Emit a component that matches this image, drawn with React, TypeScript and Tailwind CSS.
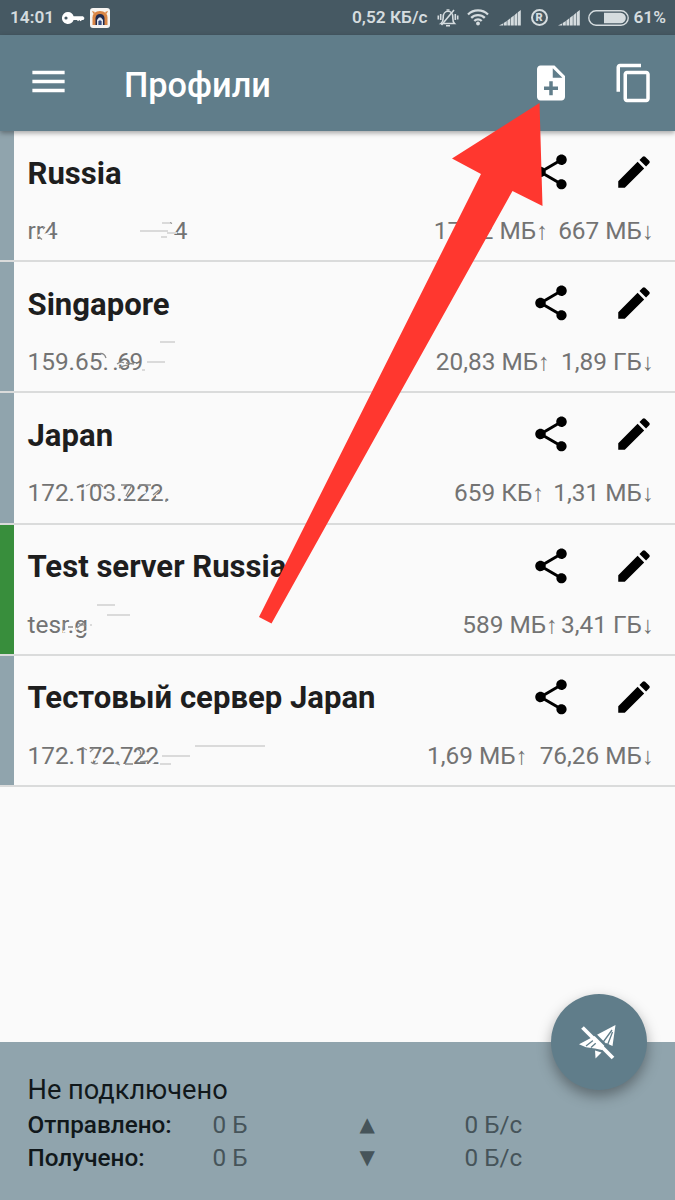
import { MdContentCopy, MdEdit, MdMenu, MdNoteAdd, MdShare } from 'react-icons/md'

type Line = [x: number, y: number, width: number]

type Profile = {
  name: string
  host: string
  hostEnd?: string
  hostEndClass?: string
  sent: string
  received: string
  gap: string
  active?: boolean
  marks: Line[]
  cuts: Line[]
  scraps: string
}

// Smudged address, all relative to the address line:
// marks are leftover light strokes, cuts are erased pieces, scraps are stray bits of digits
const profiles: Profile[] = [
  {
    name: 'Russia',
    host: 'rr4',
    hostEnd: '4',
    hostEndClass: 'ml-[116px]',
    sent: '17,62 МБ',
    received: '667 МБ',
    gap: 'gap-[10px]',
    marks: [[112, 16, 28], [134, 8, 8], [139, 18, 10], [133, 22, 6]],
    cuts: [[10, 21, 4], [16, 20, 6], [18, 11, 5]],
    scraps: 'M11 22l3 2.500M15 14l2-2M142 7.500l2 1',
  },
  {
    name: 'Singapore',
    host: '159.65',
    hostEnd: '. .69',
    hostEndClass: 'tracking-[-1.4px]',
    sent: '20,83 МБ',
    received: '1,89 ГБ',
    gap: 'gap-[11px]',
    marks: [[132, -4, 15], [119, 16, 18], [114, 24, 3]],
    cuts: [[90, 18, 9], [101, 20, 7]],
    scraps: 'M70 8q6-2 8 4M89 18q4-3 7-1M91 22q7-4 9-2M98 17l8 1',
  },
  {
    name: 'Japan',
    host: '172.103.222.',
    sent: '659 КБ',
    received: '1,31 МБ',
    gap: 'gap-[9px]',
    marks: [],
    cuts: [[50, 13, 7], [80, 16, 7], [94, 22, 5], [113, 17, 5], [128, 19, 8]],
    scraps: 'M58 9l4-2M66 10q6-5 9 0M79 15l6 2M93 8h10M104 8l-6 11M111 8h12M125 18l6-5M137 24h2',
  },
  {
    name: 'Test server Russia',
    host: 'tesr.g',
    sent: '589 МБ',
    received: '3,41 ГБ',
    gap: 'gap-[3px]',
    active: true,
    marks: [[69, -4, 18], [79, 6, 23], [62, 16, 2]],
    cuts: [[35, 23, 5], [48, 20, 5], [54, 24, 6]],
    scraps: 'M36 13l-1 8M40 18h5M49 19q5-5 9-2M50 14q3 3 6-1',
  },
  {
    name: 'Тестовый сервер Japan',
    host: '172.1',
    hostEnd: '72.722',
    hostEndClass: 'tracking-[-0.9px]',
    sent: '1,69 МБ',
    received: '76,26 МБ',
    gap: 'gap-[12px]',
    marks: [[134, 16, 28], [167, 6, 70], [132, 24, 11]],
    cuts: [[60, 14, 6], [66, 20, 6], [77, 13, 5], [100, 23, 5], [115, 16, 6], [121, 24, 5]],
    scraps: 'M55 8l4 2M62 12l4-4M63 22q3 3 7 1M87 23l5 2M97 24h8M109 9q5 1 3 6M112 22l8-1',
  },
]

const statusInk = '#d5dcdf'

function Signal() {
  return (
    <svg width="22" height="16" viewBox="0 0 22 16" fill={statusInk}>
      <path d="M0 15.500 4 13.400V15.500ZM4.700 12.900 7.800 11V15.500H4.700ZM8.400 10.400 11.300 8.300V15.500H8.400ZM11.900 7.700 14.800 5.600V15.500H11.900ZM15.400 5.200 18.200 2.800V15.500H15.400ZM18.800 2.200 21.800 0V15.500H18.800Z" />
    </svg>
  )
}

function StatusBar() {
  return (
    <div className="flex h-[35px] items-center bg-[#465963] pl-[10px] pr-[9px] text-[17.3px] font-semibold text-[#d5dcdf]">
      <span className="w-[52px]">14:01</span>
      <svg width="23" height="14" viewBox="0 0 23 14" fill="#fff">
        <path
          fillRule="evenodd"
          d="M6 1a6 6 0 1 0 5.600 8H15l1 1.200 1.300-1.200 1.200 1.200L20 9h1.500L22.500 7 21 5.300h-9.400A6 6 0 0 0 6 1ZM4 5.400a1.600 1.600 0 1 1 0 3.200 1.600 1.600 0 0 1 0-3.200Z"
        />
      </svg>
      <svg className="ml-[5px]" width="20" height="20" viewBox="0 0 20 20">
        <rect width="20" height="20" rx="3" fill="#f6f4f1" />
        <path d="M2.500 17V9.500Q3 3 10 3t7.500 6.500V17Z" fill="#d98545" />
        <path d="M2 3 5 4 3.500 6ZM18 3 15 4 16.500 6Z" fill="#d98545" />
        <path d="M5.500 17v-7Q6 6 10 6t4.500 4v7Z" fill="#202b4f" />
        <path d="M7 17v-5l2-2.500h2l2 2.500v5h-1.500v-4h-3v4Z" fill="#dfe5ee" />
        <path d="M9 17v-4.500h2V17Z" fill="#35508a" />
      </svg>
      <span className="ml-auto">0,52 КБ/с</span>
      <svg className="ml-[9px]" width="22" height="20" viewBox="0 0 22 20" fill="none" stroke={statusInk} strokeWidth="1.600">
        <path d="M4 15.500h13.500c-2-2-1.700-3.500-1.700-6.500 0-3.300-2-5.700-4.800-5.700S6.200 5.700 6.200 9c0 3 .3 4.500-2.200 6.500Z" />
        <path d="M9.500 2h3M9 17.800h4M4.500 17 17 2" />
        <path d="M3.700 6v6M1.300 7.500v4M18.300 6v6M20.700 7.500v4" />
      </svg>
      <svg className="ml-[8px]" width="22" height="17" viewBox="0 0 22 17" fill="none" stroke={statusInk} strokeWidth="2.300">
        <path d="M1 5.500a14.300 14.300 0 0 1 20 0M4.200 8.900a9.700 9.700 0 0 1 13.600 0M7.300 12a5.300 5.300 0 0 1 7.400 0" />
        <circle cx="11" cy="14.500" r="1.900" fill={statusInk} stroke="none" />
      </svg>
      <div className="ml-[10px] flex items-center gap-[10px]">
        <Signal />
        <span className="flex size-[17px] items-center justify-center rounded-full border-2 border-[#d5dcdf] text-[11px] font-black leading-none">
          R
        </span>
        <Signal />
      </div>
      <svg className="ml-[8px]" width="41" height="16" viewBox="0 0 41 16">
        <rect x=".8" y=".8" width="39.400" height="14.400" rx="7.200" fill="none" stroke={statusInk} strokeWidth="1.400" />
        <path d="M16 2.700h16.500a5.300 5.300 0 0 1 0 10.600H16Z" fill={statusInk} />
      </svg>
      <span className="ml-[5px]">61%</span>
    </div>
  )
}

function Toolbar() {
  return (
    <header className="relative z-10 flex h-[96px] items-center bg-[#607d8a] pl-[26.5px] pr-[20px] text-white shadow-[0_2px_5px_rgba(0,0,0,0.35)]">
      <MdMenu size={43} className="-mt-[3px]" />
      <h1 className="ml-[54.5px] mt-[3px] text-[34.3px] font-medium leading-[40px]">Профили</h1>
      <div className="-mt-px ml-auto flex gap-[41px]">
        <MdNoteAdd size={42} />
        <MdContentCopy size={42} />
      </div>
    </header>
  )
}

function Traffic({ value, arrow }: { value: string; arrow: string }) {
  return (
    <span className="whitespace-nowrap">
      {value}
      <span className="font-['Liberation_Sans',sans-serif] text-[24px] leading-none">{arrow}</span>
    </span>
  )
}

function ProfileRow({ profile }: { profile: Profile }) {
  return (
    <li className="flex h-[131.2px] border-b-2 border-[#dadbdb]">
      <div className={`w-[14px] shrink-0 ${profile.active ? 'bg-[#388e3c]' : 'bg-[#90a4ad]'}`} />
      <div className="flex grow flex-col pl-[13.5px] pr-[20px] pt-[20px]">
        <div className="flex h-[42px] items-center">
          <h2 className="mt-[3px] text-[31.1px] font-bold leading-[36px] text-[#1e1e1e]">{profile.name}</h2>
          <div className="ml-auto flex gap-[41px] text-black">
            <MdShare size={42} />
            <MdEdit size={42} />
          </div>
        </div>
        <div className="mt-[22px] flex h-8 pr-[1px] text-[24.4px] leading-8 text-[#737373]">
          <div className="relative whitespace-pre">
            {profile.host}
            {profile.hostEnd && <span className={profile.hostEndClass}>{profile.hostEnd}</span>}
            <svg className="absolute left-0 top-0 overflow-visible" width="240" height="32" fill="none">
              {profile.cuts.map(([x, y, w]) => (
                <path key={`${x}-${y}`} d={`M${x} ${y}l${w} -2`} stroke="#fafafa" strokeWidth="2.200" />
              ))}
              <path d={profile.scraps} stroke="#8a8a8a" strokeWidth="1.300" />
              {profile.marks.map(([x, y, w]) => (
                <path key={`${x}-${y}`} d={`M${x} ${y}h${w}`} stroke="#dadada" strokeWidth="2" />
              ))}
            </svg>
          </div>
          <div className={`ml-auto flex ${profile.gap}`}>
            <Traffic value={profile.sent} arrow="↑" />
            <Traffic value={profile.received} arrow="↓" />
          </div>
        </div>
      </div>
    </li>
  )
}

function StatsRow({ label, arrow }: { label: string; arrow: string }) {
  return (
    <div className="flex h-[33px] items-center text-[24.3px] leading-[33px] text-[#46545a]">
      <span className="w-[185px] font-medium text-[#11181b]">{label}</span>
      <span className="w-[147px]">0 Б</span>
      <span className="w-[105px] font-['DejaVu_Sans',sans-serif] text-[20px]">{arrow}</span>
      <span>0 Б/с</span>
    </div>
  )
}

function ConnectButton() {
  return (
    <button className="absolute -top-[48px] right-[28px] flex size-24 items-center justify-center rounded-full bg-[#607d8a] shadow-[0_6px_14px_rgba(0,0,0,0.35)]">
      <svg width="40" height="38" viewBox="0 0 40 38">
        <path d="M36.500 2 0 21.300 7 24.300l9 1.200 7 1.500 4-7 6.500 3Z" fill="#fff" />
        <path d="M16 27.500 22.500 29.500 16.500 35.500Z" fill="#fff" />
        <path d="M33 7 23.500 20M33.500 9 28.500 22M7 23 14 17.500M12 24.500 17 20" stroke="#607d8a" strokeWidth="1.300" />
        <path d="M7 2.500 37 32.500" stroke="#607d8a" strokeWidth="2.600" />
        <path d="M3.500 4.500 34 35" stroke="#fff" strokeWidth="3.800" />
      </svg>
    </button>
  )
}

// Red pointer from the list to the "add profile" button
function Pointer() {
  return (
    <svg className="pointer-events-none absolute left-0 top-0 z-20" width="675" height="1200">
      <path d="M539.500 103 452 158.500 481 174 259 617 271.500 623.500 512.500 191 542.500 206Z" fill="#ff372f" />
    </svg>
  )
}

export default function App() {
  return (
    <div className="relative flex h-[1200px] w-[675px] flex-col overflow-hidden bg-[#fafafa] font-[Roboto,sans-serif]">
      <StatusBar />
      <Toolbar />
      <ul className="grow">
        {profiles.map((profile) => (
          <ProfileRow key={profile.name} profile={profile} />
        ))}
      </ul>
      <footer className="relative h-[158px] bg-[#90a4ad] pl-[27.5px] pt-[29.5px]">
        <div className="h-[36px] text-[27.2px] leading-[36px] text-[#11181b]">Не подключено</div>
        <StatsRow label="Отправлено:" arrow="▲" />
        <StatsRow label="Получено:" arrow="▼" />
        <ConnectButton />
      </footer>
      <Pointer />
    </div>
  )
}
